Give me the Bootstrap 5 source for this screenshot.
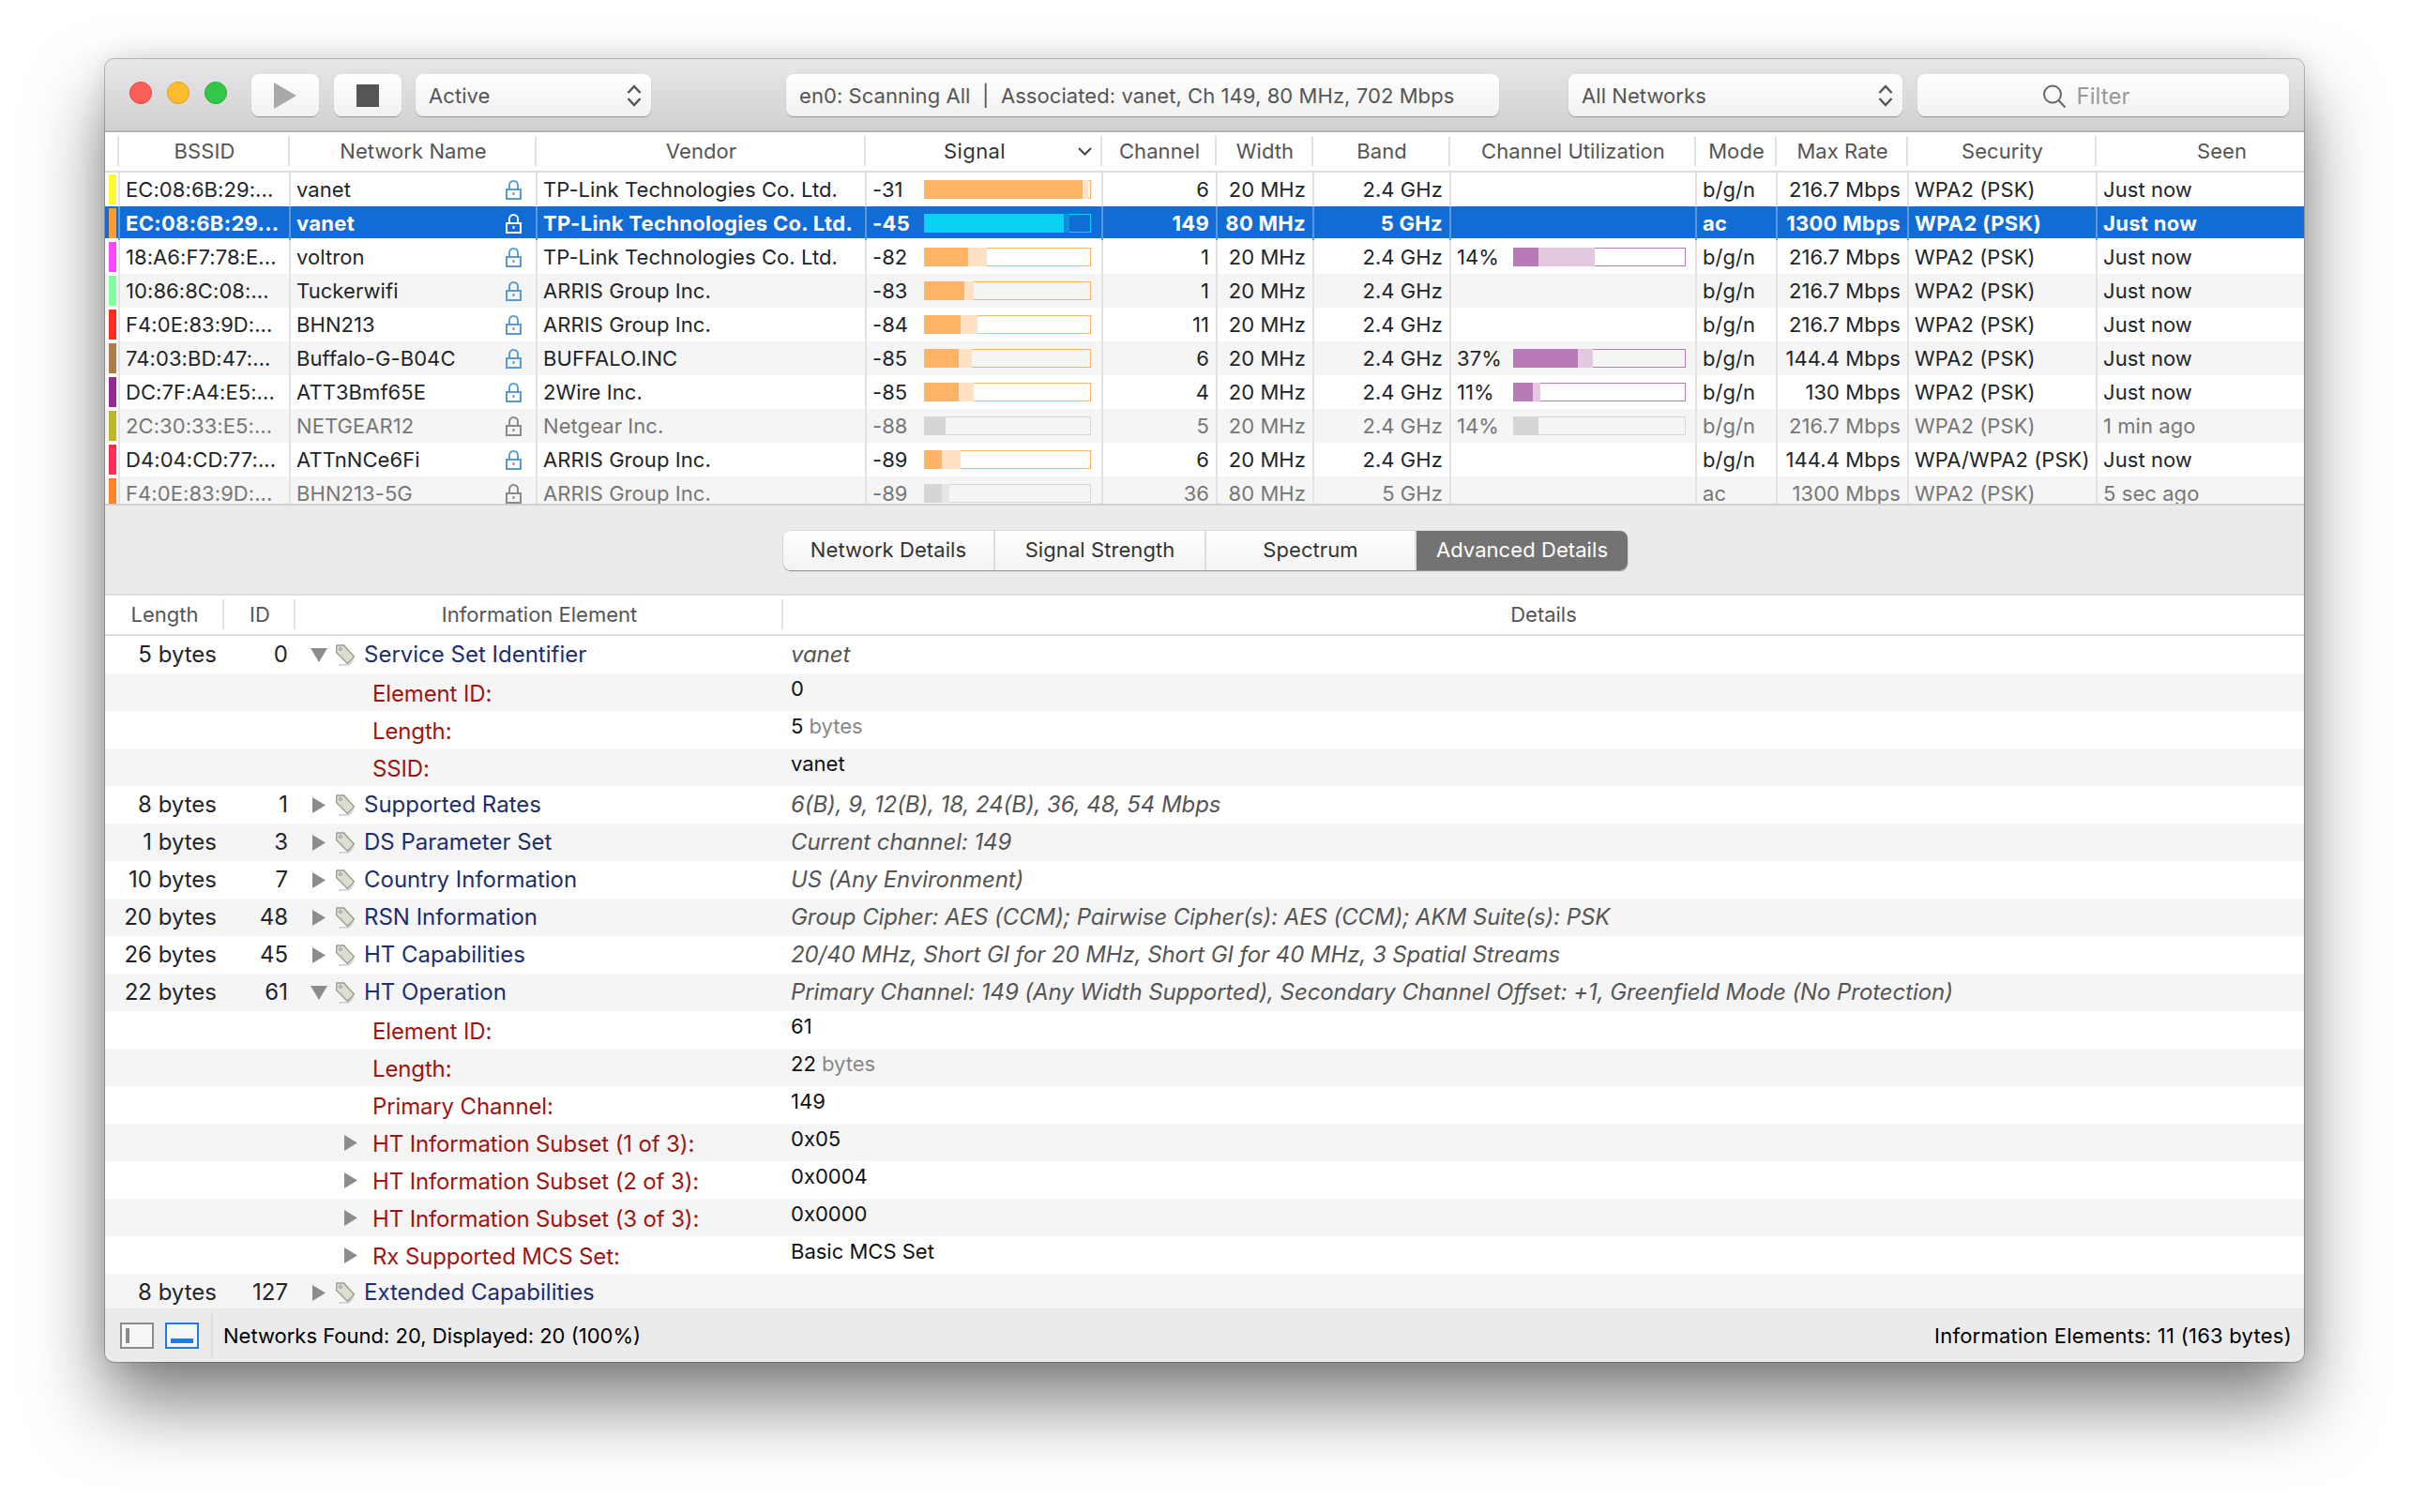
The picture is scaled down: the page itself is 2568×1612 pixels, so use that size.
<!DOCTYPE html>
<html lang="en">
<head>
<meta charset="UTF-8">
<title>WiFi Explorer</title>
<link href="https://cdn.jsdelivr.net/npm/bootstrap@5.3.0/dist/css/bootstrap.min.css" rel="stylesheet">
<style>
html, body { height: 100%; }
body { background: #fff; font-family: "Inter", "Liberation Sans", sans-serif; font-size: 22px; letter-spacing: .07px; color: #000; padding: 63px 112px 0; overflow: hidden; }
.app-win { width: 2344px; height: 1389px; background: #ebebeb; border-radius: 10px; box-shadow: 0 0 0 1px rgba(0,0,0,.22), 0 44px 80px rgba(0,0,0,.5), 0 0 30px rgba(0,0,0,.12); overflow: hidden; }
.app-win > * { flex: none; }
.tool-bar { height: 78px; padding: 16px 16px 0 26px; background: linear-gradient(#e8e6e8, #d2d0d2); border-bottom: 2px solid #b4b2b4; }
.dot { width: 24px; height: 24px; border-radius: 50%; margin-right: 16px; }
.dot-r { background: #fc5f57; border: 1px solid #e0443e; }
.dot-y { background: #fdbc2e; border: 1px solid #dfa023; }
.dot-g { background: #33c748; border: 1px solid #27aa35; }
.tb-btn { height: 45px; background: linear-gradient(#fff, #f1f1f1); border-radius: 8px; box-shadow: 0 1px 1px rgba(0,0,0,.3); color: #555; font-size: 22px; }
.text-box { padding: 1px 14px 0; white-space: nowrap; }
.wifi-table { table-layout: fixed; width: 2344px; margin: 0; background: #fff; }
.wifi-table > thead > tr > th { height: 42px; padding: 0; vertical-align: middle; font-weight: 400; color: #555; text-align: center; background: #fff; border-bottom: 2px solid #ddd; position: relative; }
.wifi-table > thead > tr > th:not(:last-child)::after { content: ""; position: absolute; right: 0; top: 4px; bottom: 5px; width: 2px; background: #e2e2e2; }
.wifi-table > thead > tr > th.seen-head { padding-left: 46px; }
.wifi-table > tbody > tr > td { height: 36px; padding: 0 7px 0 6px; border: 0; border-right: 2px solid #e2e2e2; background: transparent; color: inherit; white-space: nowrap; overflow: hidden; line-height: 36px; box-shadow: none; }
.wifi-table > tbody > tr > td:last-child { border-right: 0; }
.net-zone { height: 353px; overflow: hidden; background: #fff; }
.net-row { background: #fff; }
.net-row.alt { background: #f5f5f5; }
.net-row.dim { color: #777; }
.net-row.sel { color: #fff; font-weight: 700; letter-spacing: .3px; background: linear-gradient(#116cd6 34px, #fff 34px); }
.net-row.sel > td { border-right-color: #5d97de !important; }
.swatch { width: 8px; height: 32px; margin: 2px 0 0 4px; }
.wifi-table > tbody > tr > td.color-cell { padding: 0; vertical-align: top; border-right: 2px solid #e2e2e2; }
.sig-track { height: 20px; width: 178px; border: 1px solid #ffb366; background: transparent; position: relative; flex: none; }
.sig-track span { position: absolute; left: -1px; top: -1px; bottom: -1px; }
.bar-solid { background: #ffb366; }
.bar-soft { background: #ffe2c4; }
.sel .sig-track { border-color: #08d3f3; }
.sel .bar-solid { background: #08d3f3; }
.sel .bar-soft { background: #0e8fdc; }
.use-track { border-color: #b87ab8; width: 184px; margin-right: 3px; }
.use-track .bar-solid { background: #b87ab8; }
.use-track .bar-soft { background: #e3c8e0; }
.dim .sig-track { border-color: #d8d8d8; }
.dim .sig-track .bar-solid { background: #d6d6d6; }
.dim .sig-track .bar-soft { background: #e6e6e6; }
.mid-bar { height: 96px; border-top: 2px solid #d0d0d0; padding: 27px 0 0 2px; }
.seg-group { width: 900px; height: 42px; border-radius: 8px; background: linear-gradient(#fff, #f3f3f3); box-shadow: 0 1px 1px rgba(0,0,0,.35), 0 0 0 1px rgba(0,0,0,.06); color: #333; overflow: hidden; }
.seg-item { border-right: 2px solid #ddd; line-height: 41px; text-align: center; }
.seg-item.on { background: #737373; color: #fff; border: 0; }
.ie-table { font-size: 24px; letter-spacing: 0; }
.ie-table > thead > tr > th { font-size: 22px; height: 43px; border-top: 2px solid #ddd; }
.ie-table > tbody > tr > td { height: 40px; line-height: 40px; border: 0; padding: 0 5px; overflow: visible; }
.ie-zone { height: 717px; overflow: hidden; background: #fff; }
.ie-row { background: #fff; }
.ie-row.alt { background: #f5f5f5; }
.ie-len { color: #666; text-align: right; }
.ie-table > tbody > tr > td.ie-len { padding-right: 8px; }
.ie-table > tbody > tr > td.ie-id { text-align: right; padding-right: 8px; }
.ie-table > tbody > tr > td.ie-detail { padding-left: 8px; }
.ie-name { color: #1d2d6e; }
.ie-label { color: #a01410; position: relative; top: 2px; letter-spacing: -.14px; }
.ie-val { font-style: italic; color: #555; letter-spacing: -.08px; }
.ie-sub { font-size: 22px; color: #111; position: relative; top: -4px; }
.ie-sub em { font-style: normal; color: #888; }
.ie-wrap { display: flex; align-items: center; height: 40px; }
.status-row { height: 56px; padding: 2px 13px 0 16px; background: #ebebeb; letter-spacing: 0; }
.pane-ico { width: 36px; height: 28px; border: 2px solid #8c8c8c; background: #f7f7f7; margin-right: 12px; }
.pane-div { width: 2px; height: 48px; background: #ddd; margin: 0 11px 0 0; }
.status-end { letter-spacing: .25px; }
</style>
</head>
<body>
<div class="app-win d-flex flex-column">
    <div class="tool-bar d-flex align-items-start">
        <span class="dot dot-r mt-2"></span><span class="dot dot-y mt-2"></span><span class="dot dot-g mt-2" style="margin-right:26px"></span>
        <div class="tb-btn d-flex align-items-center justify-content-center" style="width:72px;margin-right:16px">
            <svg width="24" height="28" viewBox="0 0 24 28"><path d="M0 0 24 14 0 28Z" fill="#a9a9a9"/></svg>
        </div>
        <div class="tb-btn d-flex align-items-center justify-content-center" style="width:72px;margin-right:15px">
            <svg width="24" height="24"><rect width="24" height="24" fill="#555"/></svg>
        </div>
        <div class="tb-btn text-box d-flex align-items-center justify-content-between" style="width:251px;margin-right:144px">
            <span>Active</span>
            <svg width="16" height="24" viewBox="0 0 16 24" fill="none" stroke="#555" stroke-width="2.4" style="margin-right:-4px"><path d="M1.5 9 8 2l6.500 7M1.500 15 8 22l6.500-7"/></svg>
        </div>
        <div class="tb-btn text-box d-flex align-items-center" style="width:760px;margin-right:74px">en0: Scanning All&nbsp; |&nbsp; Associated: vanet, Ch 149, 80 MHz, 702 Mbps</div>
        <div class="tb-btn text-box d-flex align-items-center justify-content-between" style="width:356px;margin-right:16px">
            <span>All Networks</span>
            <svg width="16" height="24" viewBox="0 0 16 24" fill="none" stroke="#555" stroke-width="2.4" style="margin-right:-4px"><path d="M1.5 9 8 2l6.500 7M1.500 15 8 22l6.500-7"/></svg>
        </div>
        <div class="tb-btn d-flex align-items-center justify-content-center" style="width:396px;color:#999;font-size:24px;padding:2px 36px 0 0">
            <svg width="26" height="25" viewBox="0 0 26 25" fill="none" stroke="#666" stroke-width="2" style="margin-right:10px"><circle cx="11" cy="10.500" r="9"/><path d="m17.500 17 7 7.500"/></svg>
            <span>Filter</span>
        </div>
    </div>

    <table class="table wifi-table">
        <colgroup id="netCols"></colgroup>
        <thead><tr id="netHead"></tr></thead>
    </table>
    <div class="net-zone">
        <table class="table wifi-table">
            <colgroup id="netCols2"></colgroup>
            <tbody id="netBody"></tbody>
        </table>
    </div>

    <div class="mid-bar d-flex justify-content-center">
        <div class="seg-group d-flex">
            <div class="seg-item" style="width:226px">Network Details</div>
            <div class="seg-item" style="width:225px">Signal Strength</div>
            <div class="seg-item" style="width:224px">Spectrum</div>
            <div class="seg-item on" style="width:225px">Advanced Details</div>
        </div>
    </div>

    <table class="table wifi-table ie-table">
        <colgroup><col style="width:127px"><col style="width:76px"><col style="width:520px"><col></colgroup>
        <thead><tr><th>Length</th><th>ID</th><th>Information Element</th><th>Details</th></tr></thead>
    </table>
    <div class="ie-zone">
        <table class="table wifi-table ie-table">
            <colgroup><col style="width:127px"><col style="width:76px"><col style="width:520px"><col></colgroup>
            <tbody id="ieBody"></tbody>
        </table>
    </div>

    <div class="status-row d-flex align-items-center">
        <span class="pane-ico d-flex p-1"><span style="width:4px;background:#8c8c8c"></span></span>
        <span class="pane-ico d-flex align-items-end p-1" style="border-color:#1a7cf0;margin-right:13px"><span class="w-100" style="height:5px;background:#1a7cf0"></span></span>
        <span class="pane-div"></span>
        <span>Networks Found: 20, Displayed: 20 (100%)</span>
        <span class="ms-auto status-end">Information Elements: 11 (163 bytes)</span>
    </div>
</div>

<script src="https://cdn.jsdelivr.net/npm/bootstrap@5.3.0/dist/js/bootstrap.bundle.min.js"></script>
<script>
    const colWidths = [15, 182, 263, 351, 252, 122, 103, 146, 262, 86, 140, 201, 221];
    const heads = ['', 'BSSID', 'Network Name', 'Vendor', 'Signal', 'Channel', 'Width', 'Band', 'Channel Utilization', 'Mode', 'Max Rate', 'Security', 'Seen'];

    // swatch, bssid, name, vendor, rssi, solid, soft, ch, width, band, util, utilSolid, utilSoft, mode, rate, security, seen, flags
    const nets = [
        ['#fffb33', 'EC:08:6B:29:...', 'vanet', 'TP-Link Technologies Co. Ltd.', -31, 169, 175, 6, '20 MHz', '2.4 GHz', '', 0, 0, 'b/g/n', '216.7 Mbps', 'WPA2 (PSK)', 'Just now', ''],
        ['#ff9a2e', 'EC:08:6B:29...', 'vanet', 'TP-Link Technologies Co. Ltd.', -45, 149, 155, 149, '80 MHz', '5 GHz', '', 0, 0, 'ac', '1300 Mbps', 'WPA2 (PSK)', 'Just now', 'sel'],
        ['#ff47ff', '18:A6:F7:78:E...', 'voltron', 'TP-Link Technologies Co. Ltd.', -82, 47, 67, 1, '20 MHz', '2.4 GHz', '14%', 27, 87, 'b/g/n', '216.7 Mbps', 'WPA2 (PSK)', 'Just now', ''],
        ['#80ff9f', '10:86:8C:08:...', 'Tuckerwifi', 'ARRIS Group Inc.', -83, 43, 53, 1, '20 MHz', '2.4 GHz', '', 0, 0, 'b/g/n', '216.7 Mbps', 'WPA2 (PSK)', 'Just now', ''],
        ['#ff2d1f', 'F4:0E:83:9D:...', 'BHN213', 'ARRIS Group Inc.', -84, 39, 57, 11, '20 MHz', '2.4 GHz', '', 0, 0, 'b/g/n', '216.7 Mbps', 'WPA2 (PSK)', 'Just now', ''],
        ['#ab7d4a', '74:03:BD:47:...', 'Buffalo-G-B04C', 'BUFFALO.INC', -85, 37, 51, 6, '20 MHz', '2.4 GHz', '37%', 69, 85, 'b/g/n', '144.4 Mbps', 'WPA2 (PSK)', 'Just now', ''],
        ['#932a93', 'DC:7F:A4:E5:...', 'ATT3Bmf65E', '2Wire Inc.', -85, 37, 53, 4, '20 MHz', '2.4 GHz', '11%', 21, 29, 'b/g/n', '130 Mbps', 'WPA2 (PSK)', 'Just now', ''],
        ['#bfb826', '2C:30:33:E5:...', 'NETGEAR12', 'Netgear Inc.', -88, 23, 23, 5, '20 MHz', '2.4 GHz', '14%', 27, 27, 'b/g/n', '216.7 Mbps', 'WPA2 (PSK)', '1 min ago', 'dim'],
        ['#ff2d55', 'D4:04:CD:77:...', 'ATTnNCe6Fi', 'ARRIS Group Inc.', -89, 19, 39, 6, '20 MHz', '2.4 GHz', '', 0, 0, 'b/g/n', '144.4 Mbps', 'WPA/WPA2 (PSK)', 'Just now', ''],
        ['#ff8426', 'F4:0E:83:9D:...', 'BHN213-5G', 'ARRIS Group Inc.', -89, 19, 27, 36, '80 MHz', '5 GHz', '', 0, 0, 'ac', '1300 Mbps', 'WPA2 (PSK)', '5 sec ago', 'dim']
    ];

    const lockIcon = color => `<svg class="ms-auto flex-none" width="17" height="21" viewBox="0 0 17 21" fill="none" stroke="${color}" stroke-width="2"><path d="M4 10V5.500a4.500 4.500 0 0 1 9 0V10"/><rect x="1" y="10" width="15" height="10"/><path d="M8.500 13v3"/></svg>`;

    function bar(solid, soft, extra) {
        return `<div class="sig-track ${extra}"><span class="bar-soft" style="width:${soft}px"></span><span class="bar-solid" style="width:${solid}px"></span></div>`;
    }

    const netColHtml = colWidths.map(w => `<col style="width:${w}px">`).join('');
    document.getElementById('netCols').innerHTML = netColHtml;
    document.getElementById('netCols2').innerHTML = netColHtml;
    document.getElementById('netHead').innerHTML = heads.map(h => {
        if (h === 'Signal') {
            return `<th><div class="d-flex align-items-center justify-content-center" style="color:#333;padding:0 11px 0 80px"><span class="me-auto" style="margin-left:3px;letter-spacing:.4px">Signal</span><svg width="15" height="9" viewBox="0 0 15 9" fill="none" stroke="#444" stroke-width="2"><path d="m1 1 6.500 6.500L14 1"/></svg></div></th>`;
        }
        return `<th class="${h === 'Seen' ? 'seen-head' : ''}">${h}</th>`;
    }).join('');

    document.getElementById('netBody').innerHTML = nets.map((n, i) => {
        const lockColor = n[17] === 'sel' ? '#fff' : n[17] === 'dim' ? '#8a8a8a' : '#5b9bd5';
        return `<tr class="net-row ${i % 2 ? 'alt' : ''} ${n[17]}">
            <td class="color-cell"><div class="swatch" style="background:${n[0]}"></div></td>
            <td>${n[1]}</td>
            <td><div class="d-flex align-items-center">${n[2]}${lockIcon(lockColor)}<span style="width:8px"></span></div></td>
            <td>${n[3]}</td>
            <td><div class="d-flex align-items-center justify-content-between"><span>${n[4]}</span><span class="me-1">${bar(n[5], n[6], '')}</span></div></td>
            <td class="text-end">${n[7]}</td>
            <td class="text-end">${n[8]}</td>
            <td class="text-end">${n[9]}</td>
            <td><div class="d-flex align-items-center justify-content-between">${n[10] ? `<span>${n[10]}</span>${bar(n[11], n[12], 'use-track')}` : ''}</div></td>
            <td>${n[13]}</td>
            <td class="text-end">${n[14]}</td>
            <td>${n[15]}</td>
            <td>${n[16]}</td>
        </tr>`;
    }).join('');

    const triDown = '<svg width="18" height="15" viewBox="0 0 18 15" class="flex-none"><path d="M0 0h18L9 15Z" fill="#8c8c8c"/></svg>';
    const triRight = '<svg width="14" height="17" viewBox="0 0 14 17" class="flex-none"><path d="M0 0 14 8.500 0 17Z" fill="#8c8c8c"/></svg>';
    const tagIcon = '<svg width="22" height="23" viewBox="0 0 22 23" class="flex-none"><path d="M4 22 15 21.500 20 16" fill="none" stroke="#ccc" stroke-width="1.500"/><path d="M2 1h7.500L20.500 13l-7 7.500L1.500 8.500Z" fill="#dcdccf" stroke="#9a9a92" stroke-width="1.300"/><circle cx="6" cy="5" r="1.400" fill="#fff" stroke="#888"/></svg>';

    // top level: [length, id, open, name, value]  sub rows: [label, value, hasArrow]
    const elements = [
        ['5 bytes', 0, true, 'Service Set Identifier', 'vanet'],
        ['Element ID:', '0'],
        ['Length:', '5 <em>bytes</em>'],
        ['SSID:', 'vanet'],
        ['8 bytes', 1, false, 'Supported Rates', '6(B), 9, 12(B), 18, 24(B), 36, 48, 54 Mbps'],
        ['1 bytes', 3, false, 'DS Parameter Set', 'Current channel: 149'],
        ['10 bytes', 7, false, 'Country Information', 'US (Any Environment)'],
        ['20 bytes', 48, false, 'RSN Information', 'Group Cipher: AES (CCM); Pairwise Cipher(s): AES (CCM); AKM Suite(s): PSK'],
        ['26 bytes', 45, false, 'HT Capabilities', '20/40 MHz, Short GI for 20 MHz, Short GI for 40 MHz, 3 Spatial Streams'],
        ['22 bytes', 61, true, 'HT Operation', 'Primary Channel: 149 (Any Width Supported), Secondary Channel Offset: +1, Greenfield Mode (No Protection)'],
        ['Element ID:', '61'],
        ['Length:', '22 <em>bytes</em>'],
        ['Primary Channel:', '149'],
        ['HT Information Subset (1 of 3):', '0x05', true],
        ['HT Information Subset (2 of 3):', '0x0004', true],
        ['HT Information Subset (3 of 3):', '0x0000', true],
        ['Rx Supported MCS Set:', 'Basic MCS Set', true],
        ['8 bytes', 127, false, 'Extended Capabilities', '']
    ];

    document.getElementById('ieBody').innerHTML = elements.map((e, i) => {
        const stripe = i % 2 ? 'alt' : '';
        if (e.length > 3) {
            return `<tr class="ie-row ${stripe}">
                <td class="ie-len">${e[0]}</td>
                <td class="ie-id">${e[1]}</td>
                <td><div class="ie-wrap"><span class="d-flex justify-content-center" style="width:18px;margin:0 9px 0 11px">${e[2] ? triDown : triRight}</span><span style="margin-left:-1px" class="d-flex">${tagIcon}</span><span class="ie-name" style="margin-left:9px">${e[3]}</span></div></td>
                <td class="ie-detail"><span class="ie-val">${e[4]}</span></td>
            </tr>`;
        }
        return `<tr class="ie-row ${stripe}">
            <td></td><td></td>
            <td><div class="ie-wrap"><span style="width:14px;margin:0 16px 0 47px" class="d-flex">${e[2] ? triRight : ''}</span><span class="ie-label">${e[0]}</span></div></td>
            <td class="ie-detail"><span class="ie-sub">${e[1]}</span></td>
        </tr>`;
    }).join('');
</script>
</body>
</html>
